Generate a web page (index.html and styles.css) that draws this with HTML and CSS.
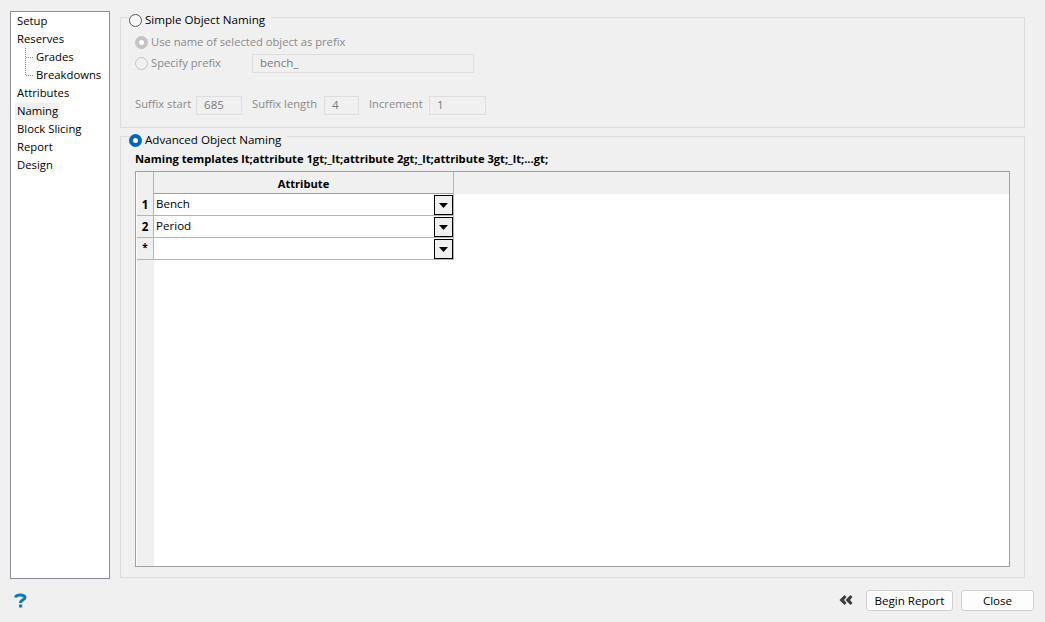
FILE: index.html
```html
<!DOCTYPE html>
<html lang="en">
<head>
<meta charset="utf-8">
<title>Reserves report</title>
<link rel="stylesheet" href="styles.css">
</head>
<body>
<div class="app">
  <div class="main">
    <nav class="nav">
      <div class="nav-item"><span>Setup</span></div>
      <div class="nav-item"><span>Reserves</span></div>
      <div class="nav-branch">
        <div class="nav-item nav-child"><i class="tick"></i><span>Grades</span></div>
        <div class="nav-item nav-child"><i class="tick"></i><span>Breakdowns</span></div>
      </div>
      <div class="nav-item"><span>Attributes</span></div>
      <div class="nav-item"><span class="selected">Naming</span></div>
      <div class="nav-item"><span>Block Slicing</span></div>
      <div class="nav-item"><span>Report</span></div>
      <div class="nav-item"><span>Design</span></div>
    </nav>
    <div class="content">
      <section class="group group-simple">
        <div class="legend"><i class="radio"></i><span>Simple Object Naming</span></div>
        <div class="option"><i class="radio radio-dim radio-dim-on"></i><span class="dim">Use name of selected object as prefix</span></div>
        <div class="option option-prefix">
          <i class="radio radio-dim"></i><span class="dim prefix-label">Specify prefix</span>
          <div class="field field-prefix">bench_</div>
        </div>
        <div class="suffix-row">
          <span class="dim label-start">Suffix start</span><div class="field field-start">685</div>
          <span class="dim label-length">Suffix length</span><div class="field field-length">4</div>
          <span class="dim label-inc">Increment</span><div class="field field-inc">1</div>
        </div>
      </section>
      <section class="group group-advanced">
        <div class="legend"><i class="radio radio-on"></i><span>Advanced Object Naming</span></div>
        <div class="caption">Naming templates lt;attribute 1gt;_lt;attribute 2gt;_lt;attribute 3gt;_lt;...gt;</div>
        <div class="sheet">
          <div class="sheet-head">
            <div class="corner"></div>
            <div class="col-head">Attribute</div>
          </div>
          <div class="sheet-body">
            <div class="row-heads">
              <div class="row-head">1</div>
              <div class="row-head">2</div>
              <div class="row-head row-new">*</div>
            </div>
            <div class="rows">
              <div class="row"><span>Bench</span><div class="drop"><svg class="drop-arrow" width="9" height="5" viewBox="0 0 9 5"><path d="M0 0h9L4.5 5z"/></svg></div></div>
              <div class="row"><span>Period</span><div class="drop"><svg class="drop-arrow" width="9" height="5" viewBox="0 0 9 5"><path d="M0 0h9L4.5 5z"/></svg></div></div>
              <div class="row"><span></span><div class="drop"><svg class="drop-arrow" width="9" height="5" viewBox="0 0 9 5"><path d="M0 0h9L4.5 5z"/></svg></div></div>
            </div>
          </div>
        </div>
      </section>
    </div>
  </div>
  <footer class="footer">
    <svg class="help" width="13" height="15" viewBox="0 0 13 15"><path class="help-curve" d="M1.500 4.500C2 1.500 11 1 11 4.500C11 7 6.500 6.500 6.500 10"/><rect class="help-dot" x="5" y="11.500" width="3.200" height="3"/></svg>
    <div class="actions">
      <svg class="collapse" width="14" height="10" viewBox="0 0 14 10"><path d="M5.500 0 L0.500 5 L5.500 10 L7.500 8 L5 5 L7.500 2z M11.500 0 L6.500 5 L11.500 10 L13.500 8 L11 5 L13.500 2z"/></svg>
      <button class="btn btn-begin">Begin Report</button>
      <button class="btn btn-close">Close</button>
    </div>
  </footer>
</div>
</body>
</html>
```
FILE: styles.css
```css
* { box-sizing: border-box; }
html, body { margin: 0; height: 100%; overflow: hidden; }
body {
  background: #f0f0f0;
  color: #000;
  font: 11.6px/16px "Open Sans", "Noto Sans", sans-serif;
}
.app {
  height: 622px;
  padding: 11px 11px 0 10px;
  display: flex;
  flex-direction: column;
}
.main { display: flex; gap: 10px; height: 568px; margin-right: 9px; }

.nav {
  width: 100px;
  background: #fff;
  border: 1px solid #8c8c96;
  padding: 0 0 0 4px;
  font-size: 11.3px;
}
.nav-item { height: 18px; display: flex; align-items: center; }
.nav-item span { padding: 0 2px; height: 17px; line-height: 15px; }
.nav-item .selected { background: #f0f0f0; }
.nav-branch {
  margin-left: 10px;
  height: 36px;
  background: repeating-linear-gradient(to bottom, #808080 0 1px, transparent 1px 2px) left top / 1px 28px no-repeat;
}
.nav-child { padding-left: 1px; }
.tick {
  width: 8px;
  height: 1px;
  background: repeating-linear-gradient(to right, #808080 0 1px, transparent 1px 2px);
}

.content { flex: 1; display: flex; flex-direction: column; gap: 8px; padding-top: 6px; margin-bottom: 1px; }
.group { position: relative; border: 1px solid #dcdcdc; }
.group-simple { height: 111px; padding: 14px 14px 0; }
.group-advanced { flex: 1; padding: 14px 14px 10px; display: flex; flex-direction: column; }
.legend {
  position: absolute;
  top: -6px;
  left: 8px;
  padding-right: 6px;
  height: 18px;
  display: flex;
  align-items: center;
  gap: 3px;
  background: #f0f0f0;
}
.group-simple .legend { top: -7px; }

.radio {
  width: 13px;
  height: 13px;
  border-radius: 50%;
  border: 1px solid #555;
  background: #f8f8f8;
  flex: none;
}
.radio-on { border: 4px solid #0067c0; background: #fff; }
.radio-dim { border-color: #c4c4c4; background: #f0f0f0; }
.radio-dim-on { border: 4px solid #c4c4c4; background: #fff; }
.dim { color: #8a8a8a; font-size: 11.2px; }
.option .dim { padding-bottom: 2px; }

.option { display: flex; align-items: center; gap: 3px; height: 21px; }
.prefix-label { width: 98px; }
.field {
  height: 19px;
  border: 1px solid #dedede;
  padding-left: 7px;
  line-height: 16px;
  color: #7a7a7a;
}
.field-prefix { width: 222px; }
.suffix-row { display: flex; align-items: center; margin-top: 22px; height: 19px; }
.suffix-row .dim { padding-bottom: 4px; }
.label-start { width: 61px; }
.label-length { width: 72px; }
.label-inc { width: 60px; }
.field-start { width: 46px; margin-right: 10px; }
.field-length { width: 35px; margin-right: 10px; }
.field-inc { width: 57px; }

.caption { font-weight: 700; font-size: 11.18px; height: 20px; line-height: 16px; }
.sheet {
  flex: 1;
  background: #fff;
  border: 1px solid #a0a0a0;
  display: flex;
  flex-direction: column;
  padding-left: 1px;
}
.sheet-head { display: flex; height: 22px; background: #f0f0f0; flex: none; }
.corner { width: 17px; border-right: 1px solid #b4b4b4; }
.col-head {
  width: 300px;
  text-align: center;
  font-weight: 700;
  font-size: 11.1px;
  line-height: 24px;
  border-right: 1px solid #b4b4b4;
  border-bottom: 1px solid #a0a0a0;
}
.sheet-body { flex: 1; display: flex; }
.row-heads { width: 17px; background: #f0f0f0; }
.row-head {
  height: 22px;
  text-align: center;
  font-weight: 700;
  line-height: 22px;
  border-right: 1px solid #b4b4b4;
  border-bottom: 1px solid #b4b4b4;
  background: #f0f0f0;
}
.row-new { font-size: 10px; line-height: 19px; }
.rows { width: 300px; }
.row {
  height: 22px;
  display: flex;
  align-items: center;
  justify-content: space-between;
  padding-left: 2px;
  padding-bottom: 1px;
  border-right: 1px solid #b4b4b4;
  border-bottom: 1px solid #b4b4b4;
}
.drop {
  width: 19px;
  height: 20px;
  align-self: flex-start;
  margin-top: 1px;
  border: 1px solid #000;
  background: #f0f0f0;
  display: flex;
  align-items: center;
  justify-content: center;
}

.footer { flex: 1; display: flex; justify-content: space-between; align-items: center; padding-bottom: 1px; }
.help { margin-left: 4px; }
.help-curve { fill: none; stroke: #0f7ab0; stroke-width: 3; }
.help-dot { fill: #0f7ab0; }
.actions { display: flex; align-items: center; }
.collapse { fill: #3c3c3c; margin-right: 13px; }
.btn {
  height: 21px;
  padding: 1px 0 0;
  background: #fdfdfd;
  border: 1px solid #d0d0d0;
  border-radius: 3px;
  font: inherit;
  color: #000;
}
.btn-begin { width: 87px; margin-right: 8px; }
.btn-close { width: 73px; }
```
